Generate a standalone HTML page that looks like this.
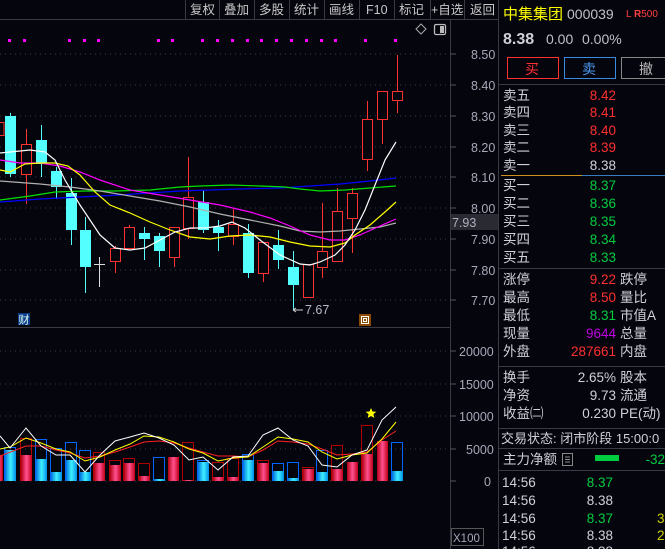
<!DOCTYPE html>
<html><head><meta charset="utf-8"><style>
html,body{margin:0;padding:0;background:#05050e;width:665px;height:549px;overflow:hidden}
svg{display:block}
text{font-family:"Liberation Sans","Noto Sans CJK SC",sans-serif}
</style></head><body>
<svg width="665" height="549" viewBox="0 0 665 549" xmlns="http://www.w3.org/2000/svg">
<defs>
<linearGradient id="gr" x1="0" x2="1" y1="0" y2="0"><stop offset="0" stop-color="#b00010"/><stop offset="0.5" stop-color="#ff5090"/><stop offset="1" stop-color="#c00018"/></linearGradient>
<linearGradient id="gc" x1="0" x2="1" y1="0" y2="0"><stop offset="0" stop-color="#0070e0"/><stop offset="0.5" stop-color="#40f0ff"/><stop offset="1" stop-color="#0090e8"/></linearGradient>
</defs>
<rect width="665" height="549" fill="#05050e"/>
<!-- toolbar -->
<line x1="0" y1="19.5" x2="498" y2="19.5" stroke="#3a3a44"/>
<g stroke="#3a3a44"><line x1="185.5" y1="0" x2="185.5" y2="19"/><line x1="219.5" y1="0" x2="219.5" y2="19"/><line x1="254.5" y1="0" x2="254.5" y2="19"/><line x1="289.5" y1="0" x2="289.5" y2="19"/><line x1="324.5" y1="0" x2="324.5" y2="19"/><line x1="359.5" y1="0" x2="359.5" y2="19"/><line x1="394.5" y1="0" x2="394.5" y2="19"/><line x1="430.5" y1="0" x2="430.5" y2="19"/><line x1="464.5" y1="0" x2="464.5" y2="19"/></g>
<g fill="#c8c8c8" font-size="12.5"><text x="190" y="14">复权</text><text x="224" y="14">叠加</text><text x="259" y="14">多股</text><text x="294" y="14">统计</text><text x="329" y="14">画线</text><text x="366" y="14">F10</text><text x="399" y="14">标记</text><text x="431" y="14">+自选</text><text x="470" y="14">返回</text></g>
<!-- frames -->
<line x1="450.5" y1="19" x2="450.5" y2="549" stroke="#3a3a44"/>
<line x1="0" y1="327.5" x2="450" y2="327.5" stroke="#3a3a44"/>
<line x1="498.5" y1="0" x2="498.5" y2="549" stroke="#3a3a44"/>
<!-- grid -->
<g stroke="#3a3a48" stroke-dasharray="1,4"><line x1="0" y1="54" x2="450" y2="54"/><line x1="0" y1="85" x2="450" y2="85"/><line x1="0" y1="116" x2="450" y2="116"/><line x1="0" y1="147" x2="450" y2="147"/><line x1="0" y1="177" x2="450" y2="177"/><line x1="0" y1="208" x2="450" y2="208"/><line x1="0" y1="239" x2="450" y2="239"/><line x1="0" y1="270" x2="450" y2="270"/><line x1="0" y1="300" x2="450" y2="300"/>
<line x1="0" y1="351" x2="450" y2="351"/><line x1="0" y1="384" x2="450" y2="384"/><line x1="0" y1="416" x2="450" y2="416"/><line x1="0" y1="449" x2="450" y2="449"/><line x1="0" y1="481" x2="405" y2="481"/></g>
<g stroke="#555" ><line x1="450" y1="54" x2="456" y2="54"/><line x1="450" y1="85" x2="456" y2="85"/><line x1="450" y1="116" x2="456" y2="116"/><line x1="450" y1="147" x2="456" y2="147"/><line x1="450" y1="177" x2="456" y2="177"/><line x1="450" y1="208" x2="456" y2="208"/><line x1="450" y1="239" x2="456" y2="239"/><line x1="450" y1="270" x2="456" y2="270"/><line x1="450" y1="300" x2="456" y2="300"/><line x1="450" y1="351" x2="456" y2="351"/><line x1="450" y1="384" x2="456" y2="384"/><line x1="450" y1="416" x2="456" y2="416"/><line x1="450" y1="449" x2="456" y2="449"/><line x1="450" y1="481" x2="456" y2="481"/></g>
<g fill="#a8a8b8" font-size="12.5"><text x="471" y="59">8.50</text><text x="471" y="90">8.40</text><text x="471" y="121">8.30</text><text x="471" y="152">8.20</text><text x="471" y="182">8.10</text><text x="471" y="213">8.00</text><text x="471" y="244">7.90</text><text x="471" y="275">7.80</text><text x="471" y="305">7.70</text>
<text x="459" y="356">20000</text><text x="459" y="389">15000</text><text x="459" y="421">10000</text><text x="466" y="454">5000</text><text x="484" y="486">0</text></g>
<rect x="451" y="214" width="47" height="16" fill="#2a2a32"/><text x="452" y="227" fill="#b0b0c0" font-size="12.5">7.93</text>
<rect x="451.5" y="528.5" width="32" height="17" fill="none" stroke="#555"/><text x="453" y="542" fill="#a8a8b8" font-size="11.5">X100</text>
<!-- icons top -->
<path d="M421 24 L426 29 L421 34 L416 29 Z" fill="none" stroke="#aaa"/>
<rect x="434.5" y="24.5" width="11" height="10" rx="1.5" fill="none" stroke="#bbb" stroke-width="1.3"/><rect x="440" y="26" width="4" height="7" fill="#bbb"/>
<!-- magenta dots -->
<g fill="#ff00ff"><rect x="8" y="39" width="3" height="3"/><rect x="23" y="39" width="3" height="3"/><rect x="68" y="39" width="3" height="3"/><rect x="83" y="39" width="3" height="3"/><rect x="97" y="39" width="3" height="3"/><rect x="157" y="39" width="3" height="3"/><rect x="171" y="39" width="3" height="3"/><rect x="201" y="39" width="3" height="3"/><rect x="216" y="39" width="3" height="3"/><rect x="231" y="39" width="3" height="3"/><rect x="246" y="39" width="3" height="3"/><rect x="260" y="39" width="3" height="3"/><rect x="275" y="39" width="3" height="3"/><rect x="290" y="39" width="3" height="3"/><rect x="305" y="39" width="3" height="3"/><rect x="320" y="39" width="3" height="3"/><rect x="334" y="39" width="3" height="3"/><rect x="364" y="39" width="3" height="3"/><rect x="394" y="39" width="3" height="3"/></g>
<!-- candles -->
<g stroke="#ff3232" fill="#05050e" stroke-width="1">
<rect x="-5" y="122.5" width="9" height="13"/>
<path d="M26.5 129V144M26.5 174V204"/><rect x="21.5" y="144.5" width="10" height="30"/>
<path d="M115.5 246V248M115.5 261V273"/><rect x="110.5" y="248.5" width="10" height="13"/>
<path d="M129.5 225V227M129.5 248V250"/><rect x="124.5" y="227.5" width="10" height="21"/>
<path d="M174.5 257V267"/><rect x="169.5" y="227.5" width="10" height="30"/>
<path d="M188.5 157V197M188.5 228V239"/><rect x="183.5" y="197.5" width="10" height="31"/>
<path d="M233.5 209V224M233.5 236V245"/><rect x="228.5" y="224.5" width="10" height="12"/>
<path d="M263.5 273V282"/><rect x="258.5" y="242.5" width="10" height="31"/>
<rect x="303.5" y="264.5" width="10" height="33"/>
<path d="M322.5 203V251M322.5 267V278"/><rect x="317.5" y="251.5" width="10" height="16"/>
<path d="M337.5 188V211"/><rect x="332.5" y="211.5" width="10" height="50"/>
<path d="M352.5 188V193M352.5 218V253"/><rect x="347.5" y="193.5" width="10" height="25"/>
<path d="M367.5 101V119M367.5 159V171"/><rect x="362.5" y="119.5" width="10" height="40"/>
<path d="M382.5 119V144"/><rect x="377.5" y="91.5" width="10" height="28"/>
<path d="M397.5 55V91M397.5 100V113"/><rect x="392.5" y="91.5" width="10" height="9"/>
</g>
<g stroke="#54ffff" fill="#54ffff">
<path d="M10.5 113V177M41.5 125V177M56.5 167V199M71.5 178V245M85.5 217V293M144.5 227V260M159.5 233V267M203.5 190V233M218.5 220V251M248.5 224V278M278.5 230V269M293.5 251V310"/>
<rect x="5" y="116" width="11" height="58" stroke="none"/><rect x="36" y="140" width="11" height="24" stroke="none"/><rect x="51" y="171" width="11" height="16" stroke="none"/><rect x="66" y="193" width="11" height="37" stroke="none"/><rect x="80" y="230" width="11" height="37" stroke="none"/><rect x="139" y="233" width="11" height="6" stroke="none"/><rect x="154" y="236" width="11" height="15" stroke="none"/><rect x="198" y="202" width="11" height="28" stroke="none"/><rect x="213" y="227" width="11" height="6" stroke="none"/><rect x="243" y="233" width="11" height="40" stroke="none"/><rect x="273" y="245" width="11" height="15" stroke="none"/><rect x="288" y="267" width="11" height="18" stroke="none"/>
</g>
<path d="M99.5 257V287M94 264.5H105" stroke="#ddd"/>
<!-- MAs -->
<g fill="none" stroke-width="1.2">
<polyline stroke="#0000ff" points="0,202 40,199 80,197 120,195 150,193 180,191 210,190 240,189 280,188 310,186 340,184 370,181 396,178"/>
<polyline stroke="#00e000" points="0,200 30,196 55,192 85,191 115,191 150,190 180,187 200,186 230,185 260,186 285,187 300,189 320,191 345,190 370,188 396,186"/>
<polyline stroke="#b0b0b0" points="0,181 40,184 70,187 100,191 130,196 160,201 190,207 220,214 250,220 280,226 300,231 320,232 340,231 360,229 380,227 396,223"/>
<polyline stroke="#ff00ff" points="0,160 20,163 40,163 60,166 80,172 100,180 130,190 160,195 190,200 220,205 250,212 270,218 290,226 310,235 330,240 345,240 360,235 380,226 396,219"/>
<polyline stroke="#ffff00" points="0,170 10,172 25,164 40,163 55,163 68,166 80,175 95,192 110,205 130,213 150,222 170,230 190,237 210,239 230,236 250,235 270,237 290,242 310,246 330,247 345,243 355,235 370,225 385,212 396,202"/>
<polyline stroke="#ffffff" points="0,153 30,150 45,152 55,160 65,180 80,205 100,235 115,248 130,250 145,248 160,240 175,232 190,228 205,228 220,226 232,222 245,228 260,240 280,255 300,264 310,265 320,262 335,255 345,245 355,230 365,210 375,185 385,160 396,142"/>
</g>
<path d="M293 310H303M293 310l3-2M293 310l3 2" stroke="#ccc" fill="none"/>
<text x="305" y="314" fill="#b8b8c8" font-size="12.5">7.67</text>
<rect x="18" y="313" width="12" height="12" fill="#0a3a8a"/><text x="18.5" y="323.5" fill="#dfe" font-size="11">财</text>
<rect x="359" y="314" width="12" height="12" fill="#8a4a00"/><rect x="361.5" y="316.5" width="7" height="7" fill="none" stroke="#fff"/><rect x="363.5" y="318.5" width="3" height="3" fill="none" stroke="#fff"/>
<!-- volume outlines -->
<g fill="none" stroke-width="1">
<g stroke="#0066ff"><rect x="4.5" y="447.5" width="11" height="33"/><rect x="35.5" y="439.5" width="11" height="41"/><rect x="50.5" y="448.5" width="11" height="32"/><rect x="65.5" y="442.5" width="11" height="38"/><rect x="79.5" y="450.5" width="11" height="30"/><rect x="153.5" y="457.5" width="11" height="23"/><rect x="197.5" y="460.5" width="11" height="20"/><rect x="242.5" y="454.5" width="11" height="26"/><rect x="272.5" y="463.5" width="11" height="17"/><rect x="287.5" y="462.5" width="11" height="18"/><rect x="316.5" y="450.5" width="11" height="30"/><rect x="391.5" y="442.5" width="11" height="38"/></g>
<g stroke="#b00000"><rect x="20.5" y="438.5" width="11" height="42"/><rect x="93.5" y="452.5" width="11" height="28"/><rect x="109.5" y="460.5" width="11" height="20"/><rect x="123.5" y="458.5" width="11" height="22"/><rect x="138.5" y="463.5" width="11" height="17"/><rect x="182.5" y="442.5" width="11" height="38"/><rect x="212.5" y="462.5" width="11" height="18"/><rect x="227.5" y="458.5" width="11" height="22"/><rect x="257.5" y="460.5" width="11" height="20"/><rect x="302.5" y="467.5" width="11" height="13"/><rect x="331.5" y="445.5" width="11" height="35"/><rect x="361.5" y="425.5" width="11" height="55"/></g>
</g>
<g fill="url(#gc)"><rect x="5" y="450" width="11" height="31"/><rect x="36" y="459" width="11" height="22"/><rect x="51" y="472" width="11" height="9"/><rect x="66" y="460" width="11" height="21"/><rect x="80" y="472" width="11" height="9"/><rect x="154" y="479" width="11" height="2"/><rect x="198" y="462" width="11" height="19"/><rect x="243" y="460" width="11" height="21"/><rect x="273" y="471" width="11" height="10"/><rect x="288" y="478" width="11" height="3"/><rect x="317" y="472" width="11" height="9"/><rect x="392" y="471" width="11" height="10"/></g>
<g fill="url(#gr)"><rect x="-6" y="455" width="9" height="26"/><rect x="21" y="455" width="11" height="26"/><rect x="94" y="463" width="11" height="18"/><rect x="110" y="465" width="11" height="16"/><rect x="124" y="463" width="11" height="18"/><rect x="139" y="476" width="11" height="5"/><rect x="168" y="457" width="11" height="24"/><rect x="183" y="480" width="11" height="1"/><rect x="213" y="477" width="11" height="4"/><rect x="228" y="477" width="11" height="4"/><rect x="258" y="463" width="11" height="18"/><rect x="303" y="469" width="11" height="12"/><rect x="332" y="469" width="11" height="12"/><rect x="347" y="462" width="11" height="19"/><rect x="362" y="454" width="11" height="27"/><rect x="377" y="441" width="11" height="40"/></g>
<g fill="none" stroke-width="1">
<polyline stroke="#ff2020" points="0,456 26,446 41,446 56,450 70,453 85,458 100,456 115,452 130,447 144,442 159,441 174,443 189,448 203,452 218,456 233,456 248,457 263,450 278,441 293,442 308,444 322,449 337,455 352,454 367,452 382,440 396,431"/>
<polyline stroke="#ffff00" points="0,449 10,447 26,438 41,443 56,449 70,452 85,461 100,457 115,450 130,444 144,436 159,437 174,442 189,449 203,453 218,461 233,458 248,457 263,447 278,437 293,439 308,442 322,452 337,459 352,455 367,453 382,439 396,422"/>
<polyline stroke="#ffffff" points="0,436 10,448 26,428 41,446 56,455 70,455 85,472 100,455 115,441 130,437 144,433 159,438 174,445 189,460 203,457 218,470 233,457 248,456 263,435 278,428 293,440 308,446 322,465 337,467 352,455 367,450 382,420 396,407"/>
</g>
<path d="M371 408l1.5 3.5 3.8.3-2.9 2.5.9 3.7-3.3-2-3.3 2 .9-3.7-2.9-2.5 3.8-.3z" fill="#ffff00"/>
<!-- right panel -->
<text x="503" y="19" fill="#ffff00" font-size="15">中集集团</text>
<text x="567" y="19" fill="#c0c0c8" font-size="14">000039</text>
<text x="626" y="17" fill="#ff4040" font-size="10">L <tspan font-weight="bold">R</tspan>500</text>
<text x="503" y="44" fill="#d0d0d8" font-size="16" font-weight="bold">8.38</text>
<text x="546" y="44" fill="#c0c0c8" font-size="14">0.00</text>
<text x="582" y="44" fill="#c0c0c8" font-size="14">0.00%</text>
<rect x="507.5" y="57.5" width="51" height="21" fill="none" stroke="#ff3030"/><text x="525" y="74" fill="#ff3030" font-size="14">买</text>
<rect x="564.5" y="57.5" width="51" height="21" fill="none" stroke="#3a8ae0"/><text x="582" y="74" fill="#4a9af0" font-size="14">卖</text>
<rect x="621.5" y="57.5" width="50" height="21" fill="none" stroke="#888"/><text x="639" y="74" fill="#bbb" font-size="14">撤</text>
<g stroke="#3a3a44"><line x1="498" y1="84.5" x2="665" y2="84.5"/><line x1="498" y1="268.5" x2="665" y2="268.5"/><line x1="498" y1="366.5" x2="665" y2="366.5"/><line x1="498" y1="428.5" x2="665" y2="428.5"/><line x1="498" y1="448.5" x2="665" y2="448.5"/><line x1="498" y1="470.5" x2="665" y2="470.5"/></g>
<line x1="501" y1="175.5" x2="582" y2="175.5" stroke="#d09020"/><line x1="582" y1="175.5" x2="665" y2="175.5" stroke="#3a7ac0"/>
<g font-size="13.5" fill="#d0d0d8">
<text x="503" y="100">卖五</text><text x="503" y="117">卖四</text><text x="503" y="135">卖三</text><text x="503" y="152">卖二</text><text x="503" y="170">卖一</text>
<text x="503" y="190">买一</text><text x="503" y="208">买二</text><text x="503" y="226">买三</text><text x="503" y="244">买四</text><text x="503" y="262">买五</text>
<text x="503" y="284">涨停</text><text x="503" y="302">最高</text><text x="503" y="320">最低</text><text x="503" y="338">现量</text><text x="503" y="356">外盘</text>
<text x="620" y="284">跌停</text><text x="620" y="302">量比</text><text x="620" y="320">市值A</text><text x="620" y="338">总量</text><text x="620" y="356">内盘</text>
<text x="503" y="382">换手</text><text x="503" y="400">净资</text><text x="503" y="418">收益㈡</text>
<text x="620" y="382">股本</text><text x="620" y="400">流通</text><text x="620" y="418">PE(动)</text>
<text x="501" y="443" font-size="13">交易状态: 闭市阶段 15:00:0</text>
<text x="503" y="464">主力净额</text>
<text x="502" y="487">14:56</text><text x="502" y="505">14:56</text><text x="502" y="523">14:56</text><text x="502" y="540">14:56</text><text x="502" y="556">14:56</text>
</g>
<g font-size="13.5" text-anchor="end">
<g fill="#ff3030"><text x="616" y="100">8.42</text><text x="616" y="117">8.41</text><text x="616" y="135">8.40</text><text x="616" y="152">8.39</text><text x="616" y="284">9.22</text><text x="616" y="302">8.50</text><text x="616" y="356">287661</text></g>
<text x="616" y="170" fill="#d0d0d8">8.38</text>
<g fill="#00cc40"><text x="616" y="190">8.37</text><text x="616" y="208">8.36</text><text x="616" y="226">8.35</text><text x="616" y="244">8.34</text><text x="616" y="262">8.33</text><text x="616" y="320">8.31</text><text x="613" y="487">8.37</text><text x="613" y="523">8.37</text><text x="665" y="464">-32</text></g>
<text x="616" y="338" fill="#c000e0">9644</text>
<g fill="#d0d0d8"><text x="616" y="382">2.65%</text><text x="616" y="400">9.73</text><text x="616" y="418">0.230</text><text x="613" y="505">8.38</text><text x="613" y="540">8.38</text><text x="613" y="556">8.38</text></g>
</g>
<text x="657" y="523" fill="#d0d000" font-size="13.5">3</text><text x="657" y="540" fill="#d0d000" font-size="13.5">2</text>
<rect x="562.5" y="453.5" width="10" height="12" fill="none" stroke="#888"/><path d="M565 457h5M565 459.5h5M565 462h5" stroke="#888"/>
<rect x="595" y="455" width="24" height="6" fill="#00cc40"/>
</svg>
</body></html>
